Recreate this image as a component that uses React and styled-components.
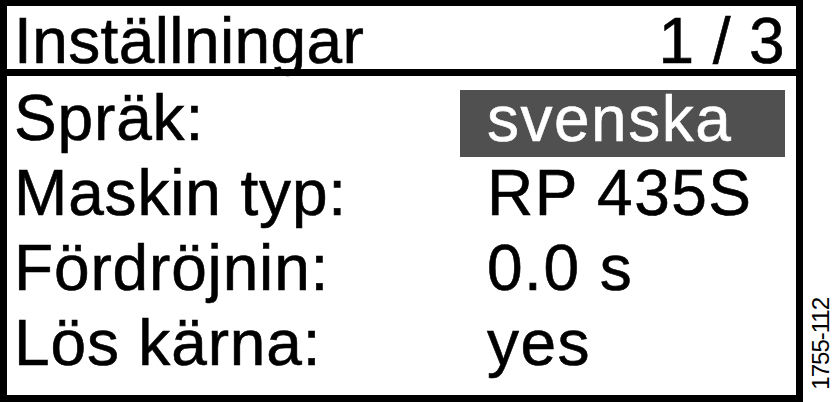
import React from "react";
import styled, { createGlobalStyle } from "styled-components";

const rows = [
  { label: "Spräk:", value: "svenska", selected: true },
  { label: "Maskin typ:", value: "RP 435S" },
  { label: "Fördröjnin:", value: "0.0 s" },
  { label: "Lös kärna:", value: "yes" },
];

const GlobalStyle = createGlobalStyle`
  html, body {
    margin: 0;
    padding: 0;
    background: #ffffff;
    overflow: hidden;
  }
  body {
    font-family: "Liberation Sans", Arial, sans-serif;
    color: #000000;
  }
`;

const Page = styled.div`
  display: flex;
  width: 833px;
  height: 402px;
`;

const Display = styled.div`
  box-sizing: border-box;
  width: 803px;
  height: 402px;
  border: 7px solid #000;
  border-top-width: 6px;
  display: flex;
  flex-direction: column;
  -webkit-text-stroke: 0.6px;
`;

const Header = styled.div`
  box-sizing: border-box;
  height: 70px;
  border-bottom: 7px solid #000;
  padding: 0 11px 0 7px;
  display: flex;
  justify-content: space-between;
  align-items: flex-start;
  font-size: 64px;
  line-height: 70px;
  letter-spacing: 0.4px;
  white-space: pre;
`;

const Body = styled.div`
  padding: 5px 11px 0 7px;
`;

const Row = styled.div`
  display: grid;
  grid-template-columns: 446px 325px;
  height: 75px;
  font-size: 64px;
  line-height: 75px;
  white-space: pre;
`;

const Label = styled.div`
  letter-spacing: 0.85px;
`;

const Value = styled.div`
  align-self: start;
  padding-left: 27px;
  letter-spacing: 1.5px;
  ${(props) =>
    props.selected &&
    `
    margin-top: 9px;
    line-height: 59px;
    padding-bottom: 8px;
    background: #505050;
    color: #ffffff;
  `}
`;

const Side = styled.div`
  flex: 1;
  display: flex;
  flex-direction: column;
  justify-content: flex-end;
  align-items: flex-end;
  padding: 0 2px 12px 0;
`;

const Figure = styled.span`
  writing-mode: vertical-rl;
  transform: rotate(180deg);
  font-size: 24px;
  line-height: 20px;
  letter-spacing: -1px;
  white-space: nowrap;
`;

export default function App() {
  return (
    <>
      <GlobalStyle />
      <Page>
        <Display>
          <Header>
            <span>Inställningar</span>
            <span>1 / 3</span>
          </Header>
          <Body>
            {rows.map((row) => (
              <Row key={row.label}>
                <Label>{row.label}</Label>
                <Value selected={row.selected}>{row.value}</Value>
              </Row>
            ))}
          </Body>
        </Display>
        <Side>
          <Figure>1755-112</Figure>
        </Side>
      </Page>
    </>
  );
}
